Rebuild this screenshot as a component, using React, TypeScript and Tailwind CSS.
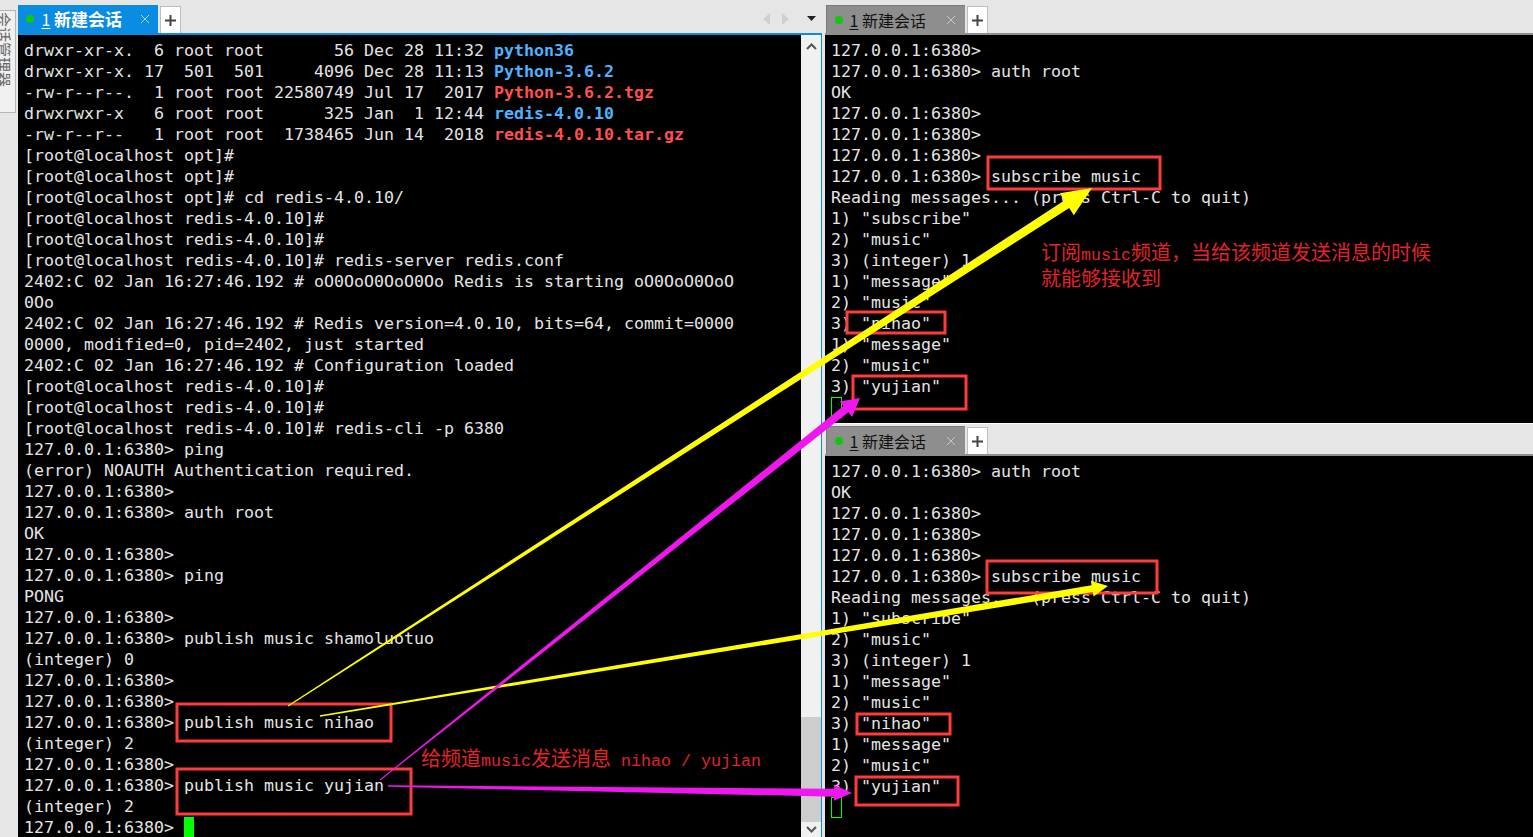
import type { ReactNode } from "react";

const blue = "font-bold text-[#4db2ff]";
const red = "font-bold text-[#ff4f4f]";
const latin = "font-['Liberation_Mono',monospace] text-[16.67px] leading-none";

function Line({ children }: { children?: ReactNode }) {
  return <div className="h-[21px] leading-[21px] whitespace-pre">{children}</div>;
}

const leftLines = [
  "[root@localhost opt]#",
  "[root@localhost opt]#",
  "[root@localhost opt]# cd redis-4.0.10/",
  "[root@localhost redis-4.0.10]#",
  "[root@localhost redis-4.0.10]#",
  "[root@localhost redis-4.0.10]# redis-server redis.conf",
  "2402:C 02 Jan 16:27:46.192 # oO0OoO0OoO0Oo Redis is starting oO0OoO0OoO",
  "0Oo",
  "2402:C 02 Jan 16:27:46.192 # Redis version=4.0.10, bits=64, commit=0000",
  "0000, modified=0, pid=2402, just started",
  "2402:C 02 Jan 16:27:46.192 # Configuration loaded",
  "[root@localhost redis-4.0.10]#",
  "[root@localhost redis-4.0.10]#",
  "[root@localhost redis-4.0.10]# redis-cli -p 6380",
  "127.0.0.1:6380> ping",
  "(error) NOAUTH Authentication required.",
  "127.0.0.1:6380>",
  "127.0.0.1:6380> auth root",
  "OK",
  "127.0.0.1:6380>",
  "127.0.0.1:6380> ping",
  "PONG",
  "127.0.0.1:6380>",
  "127.0.0.1:6380> publish music shamoluotuo",
  "(integer) 0",
  "127.0.0.1:6380>",
  "127.0.0.1:6380>",
  "127.0.0.1:6380> publish music nihao",
  "(integer) 2",
  "127.0.0.1:6380>",
  "127.0.0.1:6380> publish music yujian",
  "(integer) 2",
];

const messages = [
  '1) "subscribe"',
  '2) "music"',
  "3) (integer) 1",
  '1) "message"',
  '2) "music"',
  '3) "nihao"',
  '1) "message"',
  '2) "music"',
  '3) "yujian"',
];

const topLines = [
  "127.0.0.1:6380>",
  "127.0.0.1:6380> auth root",
  "OK",
  "127.0.0.1:6380>",
  "127.0.0.1:6380>",
  "127.0.0.1:6380>",
  "127.0.0.1:6380> subscribe music",
  "Reading messages... (press Ctrl-C to quit)",
  ...messages,
];

const bottomLines = topLines.slice(1);

const redBoxes = [
  [177, 704, 214, 37],
  [177, 769, 234, 45],
  [988, 157, 172, 32],
  [847, 312, 98, 21],
  [853, 376, 113, 33],
  [987, 561, 170, 32],
  [857, 714, 93, 20],
  [856, 777, 102, 28],
];

// thin tail that widens toward an arrow head
function arrowPoints(x0: number, y0: number, x1: number, y1: number, tail: number, neck: number, headLen: number, headW: number) {
  const len = Math.hypot(x1 - x0, y1 - y0);
  const ux = (x1 - x0) / len;
  const uy = (y1 - y0) / len;
  const nx = -uy;
  const ny = ux;
  const bx = x1 - ux * headLen;
  const by = y1 - uy * headLen;
  const pts = [
    [x0 + (nx * tail) / 2, y0 + (ny * tail) / 2],
    [bx + (nx * neck) / 2, by + (ny * neck) / 2],
    [bx + (nx * headW) / 2, by + (ny * headW) / 2],
    [x1, y1],
    [bx - (nx * headW) / 2, by - (ny * headW) / 2],
    [bx - (nx * neck) / 2, by - (ny * neck) / 2],
    [x0 - (nx * tail) / 2, y0 - (ny * tail) / 2],
  ];
  return pts.map((p) => p.map((v) => v.toFixed(1)).join(",")).join(" ");
}

function SessionTab({ active }: { active?: boolean }) {
  return (
    <div className="flex items-end gap-[2px] h-full">
      <div
        className={
          active
            ? "w-[140px] h-[28px] bg-[#0a8ce2] flex items-center pl-[8px] text-white"
            : "w-[139px] h-[28px] bg-[#8e8e8e] border-t border-l border-[#7a7a7a] flex items-center pl-[8px] text-[#111]"
        }
      >
        <span className="w-[8px] h-[8px] rounded-full bg-[#0fc70f]" />
        <span className={active ? "ml-[7px] w-[10px] text-[16px] text-center underline underline-offset-2" : "ml-[6px] w-[10px] text-[16px] text-center underline underline-offset-2"}>1</span>
        <span className={active ? "ml-[3px] text-[17px] font-bold" : "ml-[3px] text-[16px]"}>新建会话</span>
        <svg className={active ? "ml-[19px]" : "ml-[21px]"} width="8" height="8" viewBox="0 0 8 8">
          <path d="M0 0l8 8M8 0L0 8" stroke={active ? "#a9d6f5" : "#c8c8c8"} strokeWidth="1" />
        </svg>
      </div>
      <div className="w-[21px] h-[27px] bg-white border border-b-0 border-[#bdbdbd] flex items-center justify-center">
        <svg width="11" height="11" viewBox="0 0 11 11">
          <path d="M0 5.5h11M5.5 0v11" stroke="#444" strokeWidth="2" />
        </svg>
      </div>
    </div>
  );
}

export default function App() {
  return (
    <div className="relative flex w-[1533px] h-[837px] overflow-hidden bg-[#e6e6e6] font-['DejaVu_Sans_Mono','Liberation_Mono',monospace] text-[16.62px] text-[#e4e4e4]">
      {/* session manager side tab */}
      <div className="w-[18px] shrink-0 pt-[10px]">
        <div className="w-[16px] h-[103px] bg-[#f0f0f0] border border-l-0 border-[#b5b5b5] overflow-hidden flex justify-end">
          <span className="[writing-mode:vertical-rl] [text-orientation:sideways] shrink-0 font-['Noto_Sans_CJK_SC',sans-serif] text-[15px] leading-[15px] text-[#666] mr-[3px] pt-[1px]">
            会话管理器
          </span>
        </div>
      </div>

      {/* left pane */}
      <div className="w-[804px] shrink-0 flex flex-col">
        <div className="h-[33px] shrink-0 flex justify-between font-['Noto_Sans_CJK_SC',sans-serif]">
          <SessionTab active />
          <div className="flex items-center gap-[10px] pr-[6px] pt-[4px]">
            <svg width="8" height="12" viewBox="0 0 8 12"><path d="M7 0v12L0 6z" fill="#cfcfcf" /></svg>
            <svg width="8" height="12" viewBox="0 0 8 12"><path d="M1 0v12l7-6z" fill="#cfcfcf" /></svg>
            <svg className="ml-[8px]" width="9" height="5" viewBox="0 0 9 5"><path d="M0 0h9L4.5 5z" fill="#222" /></svg>
          </div>
        </div>
        <div className="flex-1 flex min-h-0 border-t-2 border-r border-[#0a8ce2]">
          <div className="flex-1 bg-black pt-[5px] pl-[6px] overflow-hidden">
            <Line>drwxr-xr-x.  6 root root       56 Dec 28 11:32 <span className={blue}>python36</span></Line>
            <Line>drwxr-xr-x. 17  501  501     4096 Dec 28 11:13 <span className={blue}>Python-3.6.2</span></Line>
            <Line>-rw-r--r--.  1 root root 22580749 Jul 17  2017 <span className={red}>Python-3.6.2.tgz</span></Line>
            <Line>drwxrwxr-x   6 root root      325 Jan  1 12:44 <span className={blue}>redis-4.0.10</span></Line>
            <Line>-rw-r--r--   1 root root  1738465 Jun 14  2018 <span className={red}>redis-4.0.10.tar.gz</span></Line>
            {leftLines.map((l, i) => (
              <Line key={i}>{l}</Line>
            ))}
            <Line>
              {"127.0.0.1:6380> "}<span className="inline-block align-top w-[10px] h-[21px] bg-[#00ff00]" />
            </Line>
          </div>
          <div className="w-[20px] shrink-0 bg-[#f1f1f1] flex flex-col items-center">
            <svg className="mt-[8px]" width="11" height="7" viewBox="0 0 11 7"><path d="M1 6l4.5-4.5L10 6" fill="none" stroke="#555" strokeWidth="2" /></svg>
            <div className="mt-auto w-full h-[105px] bg-[#cdcdcd]" />
            <div className="h-[15px] flex items-center">
              <svg width="11" height="7" viewBox="0 0 11 7"><path d="M1 1l4.5 4.5L10 1" fill="none" stroke="#555" strokeWidth="2" /></svg>
            </div>
          </div>
        </div>
      </div>

      {/* right panes */}
      <div className="flex-1 flex flex-col ml-[3px] min-w-0">
        <div className="h-[33px] shrink-0 font-['Noto_Sans_CJK_SC',sans-serif] pl-[1px]">
          <SessionTab />
        </div>
        <div className="h-[390px] shrink-0 bg-black border-t-2 border-[#8e8e8e] pt-[5px] pl-[6px] overflow-hidden">
          {topLines.map((l, i) => (
            <Line key={i}>{l}</Line>
          ))}
          <Line>
            <span className="block w-[11px] h-[21px] border border-[#00ff00]" />
          </Line>
        </div>
        <div className="h-[31px] shrink-0 border-t border-[#fafafa] font-['Noto_Sans_CJK_SC',sans-serif] pl-[1px]">
          <SessionTab />
        </div>
        <div className="flex-1 min-h-0 bg-black border-t-2 border-[#8e8e8e] pt-[5px] pl-[6px] overflow-hidden">
          {bottomLines.map((l, i) => (
            <Line key={i}>{l}</Line>
          ))}
          <Line>
            <span className="block w-[11px] h-[21px] border border-[#00ff00]" />
          </Line>
        </div>
      </div>

      {/* annotations drawn on top of the screenshot */}
      <svg className="absolute inset-0 pointer-events-none" width="1533" height="837">
        {redBoxes.map(([x, y, w, h], i) => (
          <rect key={i} x={x} y={y} width={w} height={h} fill="none" stroke="#ff3b3b" strokeWidth="3" />
        ))}
        <polygon fill="#ffff00" points={arrowPoints(288, 706, 1092, 188, 1, 9, 30, 26)} />
        <polygon fill="#ffff00" points={arrowPoints(320, 716, 1108, 586, 1.5, 7, 16, 16)} />
        <polygon fill="#f016f0" points={arrowPoints(380, 780, 860, 398, 1, 8, 18, 20)} />
        <polygon fill="#f016f0" points={arrowPoints(388, 786, 852, 793, 1.5, 8, 18, 16)} />
      </svg>
      <div className="absolute left-[1041px] top-[239px] text-[20px] leading-[25px] text-[#e0242a] font-['Noto_Sans_CJK_SC',serif]">
        <div className="whitespace-pre">订阅<span className={latin}>music</span>频道，当给该频道发送消息的时候</div>
        <div className="whitespace-pre">就能够接收到</div>
      </div>
      <div className="absolute left-[421px] top-[745px] text-[20px] leading-[25px] whitespace-pre text-[#e0242a] font-['Noto_Sans_CJK_SC',serif]">
        给频道<span className={latin}>music</span>发送消息<span className={latin}> nihao / yujian</span>
      </div>
    </div>
  );
}
